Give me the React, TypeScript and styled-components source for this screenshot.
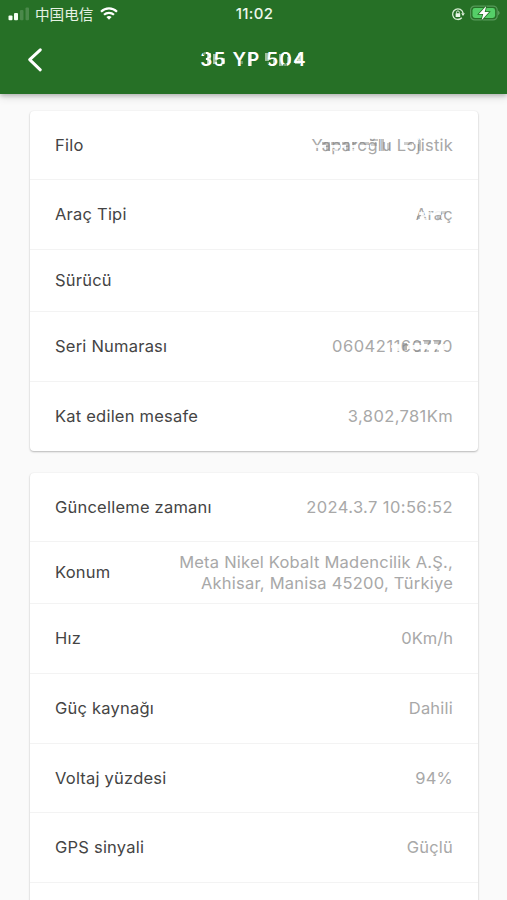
import React from "react";
import styled, { createGlobalStyle } from "styled-components";

const GlobalStyle = createGlobalStyle`
  * { box-sizing: border-box; }
  body {
    margin: 0;
    background: #fafafa;
    font-family: Inter, "Noto Sans CJK SC", sans-serif;
  }
`;

const Screen = styled.main`
  height: 900px;
  overflow: hidden;
  background: #fafafa;
`;

const Header = styled.header`
  height: 94px;
  background: #267026;
  color: #fff;
  box-shadow: 0 2px 4px rgba(0, 0, 0, 0.2), 0 4px 8px rgba(0, 0, 0, 0.1);
`;

const StatusBar = styled.div`
  display: grid;
  grid-template-columns: 1fr auto 1fr;
  align-items: center;
  height: 27px;
  padding: 0 6px 0 8px;
`;

const StatusGroup = styled.div<{ $end?: boolean }>`
  display: flex;
  align-items: center;
  gap: ${(p) => (p.$end ? 5 : 0)}px;
  justify-content: ${(p) => (p.$end ? "flex-end" : "flex-start")};
`;

const Carrier = styled.span`
  margin: 0 7px 0 5px;
  font: 400 14.6px/20px "Noto Sans CJK SC", sans-serif;
  color: #e6f2e4;
`;

const Clock = styled.span`
  font-size: 15px;
  font-weight: 500;
  letter-spacing: 0.35px;
  line-height: 20px;
  color: #edf8ec;
`;

const TitleBar = styled.div`
  display: grid;
  grid-template-columns: 70px 1fr 70px;
  align-items: center;
  height: 65px;
`;

const BackButton = styled.button`
  display: flex;
  width: 70px;
  height: 48px;
  padding: 0;
  border: 0;
  background: none;
  align-items: center;
  justify-content: center;
`;

const Title = styled.h1`
  margin: 0;
  text-align: center;
  font-size: 19px;
  font-weight: 600;
  line-height: 26px;
  letter-spacing: 1.1px;
`;

const Content = styled.div`
  display: flex;
  flex-direction: column;
  gap: 22px;
  padding: 17px 29px 0 30px;
`;

const Card = styled.section`
  border-radius: 4px;
  background: #fff;
  box-shadow: 0 1px 2px rgba(0, 0, 0, 0.26), 0 0 2px rgba(0, 0, 0, 0.06);
`;

const Row = styled.div<{ $height: number }>`
  display: flex;
  align-items: center;
  justify-content: space-between;
  height: ${(p) => p.$height}px;
  padding: 0 25px;
  border-bottom: 1px solid #f3f3f3;
  &:last-child { border-bottom: 0; }
`;

const Label = styled.span`
  font-size: 16.5px;
  line-height: 21px;
  letter-spacing: 0.22px;
  color: #444;
  white-space: nowrap;
`;

const Value = styled.span<{ $tracking?: number }>`
  font-size: 16.5px;
  line-height: 21px;
  letter-spacing: ${(p) => p.$tracking ?? 0.22}px;
  color: #a8a8a8;
  text-align: right;
  white-space: pre-line;
`;

const Redacted = styled.span`
  position: relative;
  display: inline-block;
`;

const Mosaic = styled.svg`
  position: absolute;
  inset: 0;
  width: 100%;
  height: 100%;
`;

/* Each tile: x, y, width, height, opacity; tone chooses ink or paper. */
type Tile = [number, number, number, number, number, boolean?];

function Pixelated({ text, tiles, paper, ink }: { text: string; tiles: Tile[]; paper: string; ink: string }) {
  return (
    <Redacted>
      {text}
      <Mosaic aria-hidden="true">
        {tiles.map(([x, y, w, h, o, dark], i) => (
          <rect key={i} x={x} y={y} width={w} height={h} opacity={o} fill={dark ? ink : paper} />
        ))}
      </Mosaic>
    </Redacted>
  );
}

const titleTiles: Tile[] = [
  [0, 9, 6, 6, 0.9], [3, 5, 3, 3, 0.6], [7, 6, 4, 11, 0.6, true],
  [11, 5, 3, 4, 0.5], [13, 7, 4, 10, 0.55, true], [18, 8, 6, 3, 0.6], [17, 14, 3, 3, 0.7],
  [21, 11, 4, 6, 0.45, true], [22, 17, 4, 3, 0.6],
  [31, 11, 3, 3, 0.8], [38, 14, 5, 3, 0.3, true], [42, 11, 4, 3, 0.6],
  [48, 7, 4, 12, 0.45, true], [55, 15, 6, 5, 0.4],
  [65, 6, 4, 8, 0.55, true], [70, 8, 6, 3, 0.5], [65, 14, 4, 3, 0.7], [73, 13, 3, 5, 0.5, true],
  [79, 7, 4, 12, 0.5, true], [84, 7, 3, 3, 0.8], [87, 10, 4, 6, 0.45, true], [83, 17, 4, 3, 0.6],
  [92, 8, 4, 3, 0.7], [95, 12, 5, 5, 0.5, true], [98, 6, 4, 9, 0.5, true],
];
const fleetTiles: Tile[] = [
  [0, 10, 10, 3, 0.85], [0, 13, 4, 5, 0.7], [10, 10, 5, 3, 0.85], [20, 10, 9, 3, 0.85],
  [22, 14, 5, 2, 0.6], [30, 10, 5, 3, 0.8], [41, 10, 6, 3, 0.85], [41, 14, 4, 4, 0.6],
  [49, 10, 9, 3, 0.85], [59, 10, 4, 2, 0.6], [92, 10, 10, 3, 0.85], [103, 3, 5, 6, 0.8],
  [11, 7, 4, 3, 0.5, true], [15, 7, 4, 9, 0.4, true], [20, 7, 9, 3, 0.4, true],
  [31, 7, 4, 3, 0.45, true], [35, 7, 3, 9, 0.4, true], [41, 7, 4, 3, 0.4, true],
  [49, 7, 9, 3, 0.4, true], [59, 4, 8, 2, 0.4, true], [60, 8, 6, 3, 0.35, true],
  [70, 4, 3, 12, 0.45, true], [76, 8, 3, 7, 0.35, true],
  [93, 7, 8, 3, 0.35, true], [107, 5, 3, 11, 0.4, true],
];
const typeTiles: Tile[] = [
  [3, 8, 5, 3, 0.8], [5, 11, 7, 2, 0.8], [7, 4, 4, 3, 0.65], [8, 14, 3, 4, 0.65],
  [12, 8, 4, 3, 0.7], [18, 7, 7, 4, 0.85], [25, 11, 3, 4, 0.65],
  [1, 12, 3, 3, 0.4, true], [21, 12, 4, 3, 0.4, true], [25, 7, 5, 3, 0.3, true],
];
const serialTiles: Tile[] = [
  [59, 9, 8, 3, 0.75], [64, 8, 4, 7, 0.8], [76, 9, 5, 4, 0.85], [81, 9, 10, 4, 0.9],
  [91, 9, 10, 4, 0.9], [101, 9, 10, 4, 0.9], [111, 8, 4, 6, 0.9],
  [71, 7, 4, 7, 0.55, true], [82, 5, 7, 2, 0.4, true], [83, 14, 6, 2, 0.4, true],
  [92, 5, 7, 3, 0.4, true], [93, 14, 4, 2, 0.4, true], [102, 5, 7, 3, 0.4, true], [103, 14, 4, 2, 0.4, true],
];

function SignalIcon() {
  return (
    <svg width="22" height="14" viewBox="0 0 22 14" fill="#f5fff4">
      <rect x="0.5" y="8.5" width="4" height="4.8" rx="1" />
      <rect x="6" y="6" width="4" height="7.3" rx="1" />
      <rect x="12" y="3" width="3.5" height="10.3" rx="1" opacity="0.18" />
      <rect x="17.5" y="0.5" width="3.5" height="12.8" rx="1" opacity="0.18" />
    </svg>
  );
}

function WifiIcon() {
  return (
    <svg width="18" height="14" viewBox="0 0 18 14" fill="none" stroke="#fff" strokeWidth="2.2">
      <path d="M1 4.7C5.6 0.2 12.4 0.2 17 4.7" />
      <path d="M4 7.8C6.8 5.2 11.2 5.2 14 7.8" />
      <path d="M6.4 10.1C8 8.7 10 8.7 11.6 10.1L9 12.7Z" fill="#fff" stroke="none" />
    </svg>
  );
}

function RotationLockIcon() {
  return (
    <svg width="14" height="14" viewBox="0 0 14 14" fill="none">
      <path d="M10.8 10.8A5.3 5.3 0 1 1 12.1 6" stroke="#d7edd4" strokeWidth="1.3" />
      <path d="M10.2 6.2H13.8L12 9Z" fill="#e9f7e7" />
      <rect x="4.6" y="6.2" width="4.6" height="3.8" rx="0.6" fill="#e9f7e7" />
      <path d="M5.5 6.5V5.3a1.4 1.4 0 0 1 2.8 0V6.5" stroke="#e9f7e7" strokeWidth="0.9" />
    </svg>
  );
}

function BatteryIcon() {
  return (
    <svg width="31" height="17" viewBox="0 0 31 17">
      <rect x="0.6" y="1.1" width="26.6" height="13.8" rx="4" fill="none" stroke="#57995a" strokeWidth="1.2" />
      <rect x="2.5" y="3" width="22.6" height="10" rx="2.4" fill="#55cf68" />
      <path d="M28.2 5.6Q31 8 28.2 10.4Z" fill="#66a967" />
      <path d="M16.2 1L8.9 9h4.3L11.6 15.3 19 7.1h-4.3Z" fill="#fff" stroke="#267026" strokeWidth="1.6" paintOrder="stroke" />
    </svg>
  );
}

type Item = { label: string; value?: React.ReactNode; height: number; tracking?: number };

const vehicle: Item[] = [
  { label: "Filo", height: 69, value: <Pixelated text="Yaparoğlu Lojistik" tiles={fleetTiles} paper="#fff" ink="#777" /> },
  { label: "Araç Tipi", height: 70, value: <Pixelated text="Araç" tiles={typeTiles} paper="#fff" ink="#777" /> },
  { label: "Sürücü", height: 62 },
  { label: "Seri Numarası", height: 70, tracking: 0.53, value: <Pixelated text="060421160770" tiles={serialTiles} paper="#fff" ink="#777" /> },
  { label: "Kat edilen mesafe", height: 69, tracking: 0.38, value: "3,802,781Km" },
];

const status: Item[] = [
  { label: "Güncelleme zamanı", height: 69, tracking: 0.4, value: "2024.3.7 10:56:52" },
  { label: "Konum", height: 62, value: "Meta Nikel Kobalt Madencilik A.Ş.,\nAkhisar, Manisa 45200, Türkiye" },
  { label: "Hız", height: 70, tracking: 0, value: "0Km/h" },
  { label: "Güç kaynağı", height: 70, value: "Dahili" },
  { label: "Voltaj yüzdesi", height: 69, value: "94%" },
  { label: "GPS sinyali", height: 70, value: "Güçlü" },
  { label: "", height: 70 },
];

function InfoCard({ items }: { items: Item[] }) {
  return (
    <Card>
      {items.map((item) => (
        <Row key={item.label} $height={item.height}>
          <Label>{item.label}</Label>
          <Value $tracking={item.tracking}>{item.value}</Value>
        </Row>
      ))}
    </Card>
  );
}

export default function App() {
  return (
    <Screen>
      <GlobalStyle />
      <Header>
        <StatusBar>
          <StatusGroup>
            <SignalIcon />
            <Carrier>中国电信</Carrier>
            <WifiIcon />
          </StatusGroup>
          <Clock>11:02</Clock>
          <StatusGroup $end>
            <RotationLockIcon />
            <BatteryIcon />
          </StatusGroup>
        </StatusBar>
        <TitleBar>
          <BackButton aria-label="Geri">
            <svg width="16" height="26" viewBox="0 0 16 26" fill="none" stroke="#fff" strokeWidth="3" strokeLinecap="round" strokeLinejoin="round">
              <path d="M13.3 2.8L2.7 12.7L13.3 22.8" />
            </svg>
          </BackButton>
          <Title>
            <Pixelated text="35 YP 504" tiles={titleTiles} paper="#267026" ink="#fff" />
          </Title>
        </TitleBar>
      </Header>
      <Content>
        <InfoCard items={vehicle} />
        <InfoCard items={status} />
      </Content>
    </Screen>
  );
}
